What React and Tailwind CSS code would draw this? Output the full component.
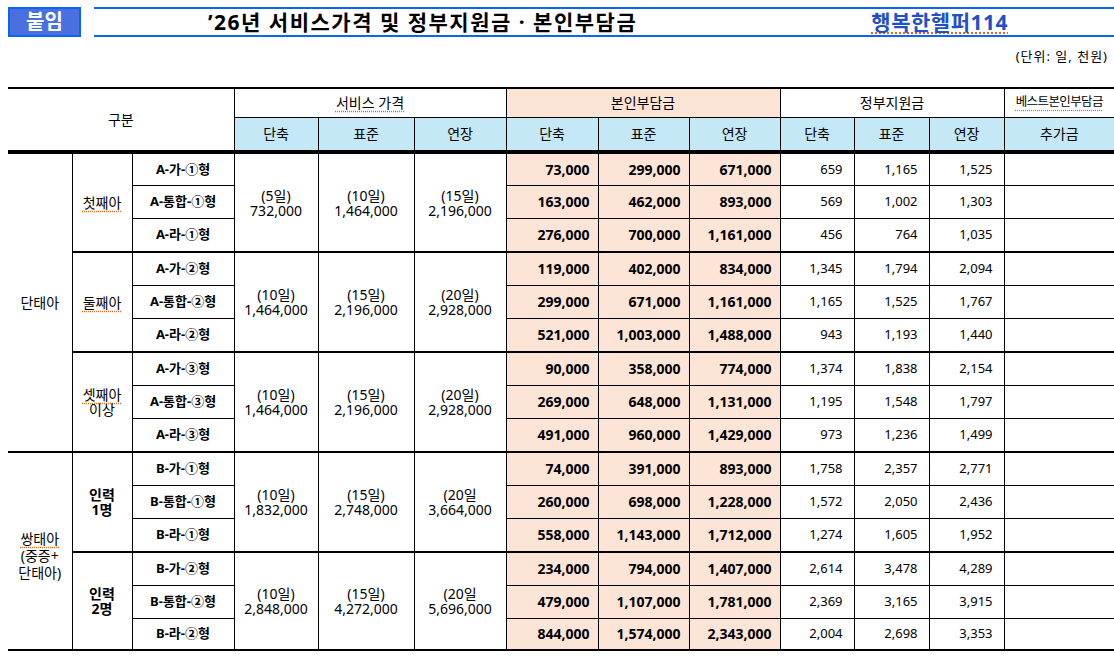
import React from 'react';

const data = [
  {
    big: [['단태아', false]],
    pad: '',
    subs: [
      {
        name: [['첫째아', true]],
        bold: false,
        prices: [['(5일)', '732,000'], ['(10일)', '1,464,000'], ['(15일)', '2,196,000']],
        rows: [
          ['A-가-①형', '73,000', '299,000', '671,000', '659', '1,165', '1,525'],
          ['A-통합-①형', '163,000', '462,000', '893,000', '569', '1,002', '1,303'],
          ['A-라-①형', '276,000', '700,000', '1,161,000', '456', '764', '1,035'],
        ],
      },
      {
        name: [['둘째아', true]],
        bold: false,
        prices: [['(10일)', '1,464,000'], ['(15일)', '2,196,000'], ['(20일)', '2,928,000']],
        rows: [
          ['A-가-②형', '119,000', '402,000', '834,000', '1,345', '1,794', '2,094'],
          ['A-통합-②형', '299,000', '671,000', '1,161,000', '1,165', '1,525', '1,767'],
          ['A-라-②형', '521,000', '1,003,000', '1,488,000', '943', '1,193', '1,440'],
        ],
      },
      {
        name: [['셋째아', true], ['이상', false]],
        bold: false,
        prices: [['(10일)', '1,464,000'], ['(15일)', '2,196,000'], ['(20일)', '2,928,000']],
        rows: [
          ['A-가-③형', '90,000', '358,000', '774,000', '1,374', '1,838', '2,154'],
          ['A-통합-③형', '269,000', '648,000', '1,131,000', '1,195', '1,548', '1,797'],
          ['A-라-③형', '491,000', '960,000', '1,429,000', '973', '1,236', '1,499'],
        ],
      },
    ],
  },
  {
    big: [['쌍태아', true], ['(중증+', false], ['단태아)', false]],
    pad: 'pt-[8px]',
    subs: [
      {
        name: [['인력', false], ['1명', false]],
        bold: true,
        prices: [['(10일)', '1,832,000'], ['(15일)', '2,748,000'], ['(20일', '3,664,000']],
        rows: [
          ['B-가-①형', '74,000', '391,000', '893,000', '1,758', '2,357', '2,771'],
          ['B-통합-①형', '260,000', '698,000', '1,228,000', '1,572', '2,050', '2,436'],
          ['B-라-①형', '558,000', '1,143,000', '1,712,000', '1,274', '1,605', '1,952'],
        ],
      },
      {
        name: [['인력', false], ['2명', false]],
        bold: true,
        prices: [['(10일)', '2,848,000'], ['(15일)', '4,272,000'], ['(20일', '5,696,000']],
        rows: [
          ['B-가-②형', '234,000', '794,000', '1,407,000', '2,614', '3,478', '4,289'],
          ['B-통합-②형', '479,000', '1,107,000', '1,781,000', '2,369', '3,165', '3,915'],
          ['B-라-②형', '844,000', '1,574,000', '2,343,000', '2,004', '2,698', '3,353'],
        ],
      },
    ],
  },
];

const UL = 'underline decoration-dotted decoration-[#e0661c] underline-offset-[3px]';

function Lines({ items, lead }) {
  return (
    <div className={lead}>
      {items.map(([t, u], i) => (
        <div key={i}>
          <span className={u ? UL : ''}>{t}</span>
        </div>
      ))}
    </div>
  );
}

function Body() {
  const trs = [];
  data.forEach((g, gi) => {
    const bigRows = g.subs.reduce((a, s) => a + s.rows.length, 0);
    g.subs.forEach((s, si) => {
      s.rows.forEach((r, ri) => {
        const last = ri === s.rows.length - 1;
        const veryLast = last && gi === data.length - 1 && si === g.subs.length - 1;
        const bb = last ? 'border-b-2' : 'border-b';
        const hc = veryLast ? 'h-[32px]' : last ? 'h-[34px]' : 'h-[33px]';
        trs.push(
          <tr key={`${gi}-${si}-${ri}`} className={hc}>
            {si === 0 && ri === 0 && (
              <td rowSpan={bigRows} className={`border-b-2 border-r border-black text-center text-[14px] ${g.pad}`}>
                <Lines items={g.big} lead="leading-[17px]" />
              </td>
            )}
            {ri === 0 && (
              <td
                rowSpan={s.rows.length}
                className={`border-b-2 border-r border-black text-center text-[14px] ${s.bold ? 'font-bold' : ''}`}
              >
                <Lines items={s.name} lead="leading-[15px]" />
              </td>
            )}
            <td className={`${bb} border-r border-black text-center text-[13px] font-bold`}>{r[0]}</td>
            {ri === 0 &&
              s.prices.map((p, pi) => (
                <td
                  key={pi}
                  rowSpan={s.rows.length}
                  className="border-b-2 border-r border-black text-center text-[14px] leading-[15px]"
                >
                  <div>{p[0]}</div>
                  <div>{p[1]}</div>
                </td>
              ))}
            {[1, 2, 3].map((k) => (
              <td key={k} className={`${bb} border-r border-black bg-[#fce4d6] text-right pr-[8px] text-[14px] font-bold`}>
                {r[k]}
              </td>
            ))}
            {[4, 5, 6].map((k) => (
              <td key={k} className={`${bb} border-r border-black text-right pr-[11px] text-[13px]`}>
                {r[k]}
              </td>
            ))}
            <td className={`${bb} border-black`}></td>
          </tr>
        );
      });
    });
  });
  return <tbody>{trs}</tbody>;
}

export default function App() {
  return (
    <div className="w-[1114px] h-[656px] bg-white overflow-hidden text-black font-['Noto_Sans','Noto_Sans_CJK_KR',sans-serif]">
      <div className="flex pt-[7px] pl-[8px]">
        <div className="w-[73px] h-[30px] bg-[#4a70e0] border-2 border-[#0a64f5] flex items-center justify-center text-white font-bold text-[20px] leading-none">
          붙임
        </div>
        <div className="ml-[13px] flex-1 h-[30px] border-y-2 border-[#0a64f5] flex items-center">
          <span className="ml-[114px] text-[21px] font-bold leading-none tracking-[1.5px]">
            ’26년 서비스가격 및 정부지원금 · 본인부담금
          </span>
          <span className={`ml-auto mr-[106px] text-[21px] font-bold leading-none tracking-[0.5px] text-[#1f4fc9] ${UL}`}>
            행복한헬퍼114
          </span>
        </div>
      </div>
      <div className="h-[50px] flex items-center justify-end pr-[6px] pb-[10px] text-[13px] tracking-[1px]">
        (단위: 일, 천원)
      </div>
      <table className="ml-[8px] w-[1106px] table-fixed border-collapse">
        <colgroup>
          <col className="w-[64px]" />
          <col className="w-[60px]" />
          <col className="w-[102px]" />
          <col className="w-[84px]" />
          <col className="w-[96px]" />
          <col className="w-[92px]" />
          <col className="w-[92px]" />
          <col className="w-[91px]" />
          <col className="w-[91px]" />
          <col className="w-[74px]" />
          <col className="w-[75px]" />
          <col className="w-[75px]" />
          <col className="w-[110px]" />
        </colgroup>
        <thead>
          <tr className="h-[29px]">
            <th
              rowSpan={2}
              colSpan={3}
              className="border-t-2 border-r border-b-4 border-b-double border-black text-[14px] font-normal"
            >
              구분
            </th>
            <th colSpan={3} className="border-t-2 border-r border-b border-black text-[14px] font-normal">
              <span className={UL}>서비스 가격</span>
            </th>
            <th colSpan={3} className="border-t-2 border-r border-b border-black bg-[#fce4d6] text-[14px] font-normal">
              본인부담금
            </th>
            <th colSpan={3} className="border-t-2 border-r border-b border-black text-[14px] font-normal">
              정부지원금
            </th>
            <th className="border-t-2 border-b border-black text-[12.5px] font-normal tracking-[-0.6px]">
              <span className={UL}>베스트본인부담금</span>
            </th>
          </tr>
          <tr className="h-[35px]">
            {['단축', '표준', '연장', '단축', '표준', '연장', '단축', '표준', '연장'].map((t, i) => (
              <th
                key={i}
                className="border-r border-b-4 border-b-double border-black bg-[#c5e8f6] text-[14px] font-normal"
              >
                {t}
              </th>
            ))}
            <th className="border-b-4 border-b-double border-black bg-[#c5e8f6] text-[14px] font-normal">추가금</th>
          </tr>
        </thead>
        <Body />
      </table>
    </div>
  );
}
